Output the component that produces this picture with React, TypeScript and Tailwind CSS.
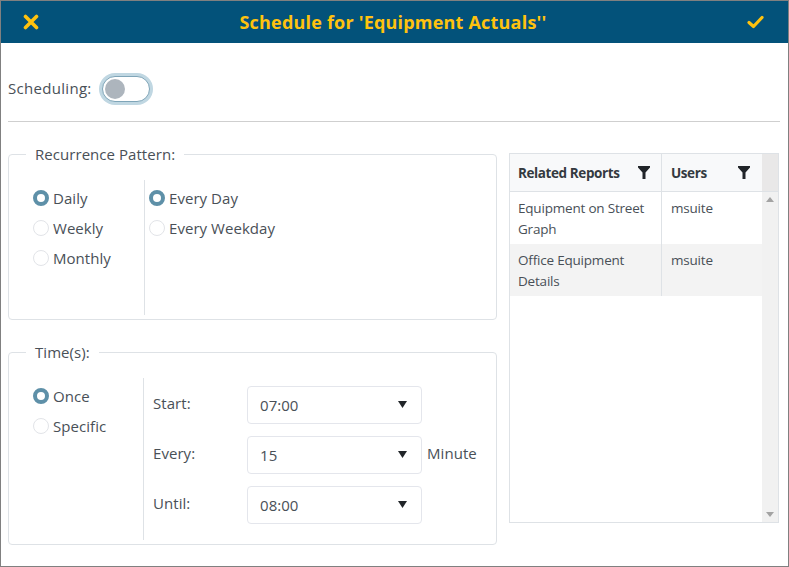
const font = { fontFamily: '"Open Sans", "Noto Sans", sans-serif' };

function Radio({ label, checked }: { label: string; checked?: boolean }) {
  return (
    <div className="flex h-[30px] items-center gap-[4px]">
      <span
        className={
          checked
            ? "h-[16px] w-[16px] rounded-full border-[4px] border-[#5e90a8] bg-white"
            : "h-[16px] w-[16px] rounded-full border border-[#e2e4e8] bg-white"
        }
      />
      <span className="text-[15px] tracking-[0.05px] text-[#495057]">{label}</span>
    </div>
  );
}

function SelectRow({ label, value, unit }: { label: string; value: string; unit?: string }) {
  return (
    <div className="flex h-[38px] items-center">
      <span className="w-[94px] pb-[4px] text-[15px] tracking-[0.05px] text-[#495057]">{label}</span>
      <div className="flex h-[38px] w-[175px] items-center justify-between rounded-[4px] border border-[#e4e6ec] pl-[12px] pr-[14px]">
        <span className="text-[15px] tracking-[0.05px] text-[#495057]">{value}</span>
        <svg width="9" height="7" viewBox="0 0 9 7" className="mb-[2px]">
          <path d="M0 0h9L4.5 7z" fill="#212529" />
        </svg>
      </div>
      {unit && <span className="ml-[5px] pb-[4px] text-[15px] tracking-[0.05px] text-[#495057]">{unit}</span>}
    </div>
  );
}

function FilterIcon() {
  return (
    <svg width="12" height="13" viewBox="0 0 12 13">
      <path d="M0 0h12v1.5L7.5 6.5V13h-3V6.5L0 1.5z" fill="#212529" />
    </svg>
  );
}

function Row({ report, user, shaded }: { report: string; user: string; shaded?: boolean }) {
  return (
    <div className={shaded ? "flex h-[52px] bg-[#f3f3f3]" : "flex h-[52px] bg-white"}>
      <div className="w-[152px] border-r border-[#dee2e6] px-[8px] pt-[6px] text-[13.5px] leading-[21px] tracking-[-0.2px] text-[#495057]">
        {report}
      </div>
      <div className="w-[100px] px-[9px] pt-[6px] text-[13.5px] leading-[21px] tracking-[-0.2px] text-[#495057]">{user}</div>
    </div>
  );
}

export default function App() {
  return (
    <div className="h-[567px] w-[789px] overflow-hidden border border-[#808080] bg-white" style={font}>
      <header className="flex h-[42px] items-center justify-between bg-[#03527a] pl-[22px] pr-[24px]">
        <svg width="16" height="16" viewBox="0 0 16 16">
          <path d="M2.5 2.5l11 11M13.5 2.5l-11 11" stroke="#ffc20e" strokeWidth="3.6" strokeLinecap="round" />
        </svg>
        <h1 className="text-[18px] font-bold tracking-[0.2px] text-[#ffc20e]">Schedule for 'Equipment Actuals''</h1>
        <svg width="17" height="14" viewBox="0 0 17 14">
          <path d="M2 7.5l4.5 4L15 2.5" fill="none" stroke="#ffc20e" strokeWidth="3.2" strokeLinecap="round" strokeLinejoin="round" />
        </svg>
      </header>

      <div className="px-[7px]">
        <div className="mr-[1px] flex h-[79px] items-center gap-[10px] border-b border-[#cfcfcf] pt-[13px]">
          <span className="text-[15px] tracking-[0.3px] text-[#495057]">Scheduling:</span>
          <div className="flex h-[26px] w-[48px] items-center rounded-full border border-[#7fa5b8] bg-white pl-[2px] shadow-[0_0_0_3px_#c0d7e2]">
            <span className="h-[20px] w-[20px] rounded-full bg-[#adb5bd]" />
          </div>
        </div>

        <div className="flex gap-[12px]">
          <div className="w-[489px] pt-[22px]">
            <fieldset className="h-[176px] rounded-[4px] border border-[#dee2e6]">
              <legend className="ml-[17px] px-[9px] text-[15px] leading-[20px] tracking-[0.05px] text-[#495057]">Recurrence Pattern:</legend>
              <div className="mt-[16px] flex">
                <div className="w-[135px] pl-[24px] pt-[3px]">
                  <Radio label="Daily" checked />
                  <Radio label="Weekly" />
                  <Radio label="Monthly" />
                </div>
                <div className="h-[135px] border-l border-[#dee2e6] pl-[4px] pt-[3px]">
                  <Radio label="Every Day" checked />
                  <Radio label="Every Weekday" />
                </div>
              </div>
            </fieldset>

            <fieldset className="mt-[22px] h-[203px] rounded-[4px] border border-[#dee2e6]">
              <legend className="ml-[17px] px-[9px] text-[15px] leading-[20px] tracking-[0.05px] text-[#495057]">Time(s):</legend>
              <div className="mt-[16px] flex">
                <div className="w-[134px] pl-[24px] pt-[3px]">
                  <Radio label="Once" checked />
                  <Radio label="Specific" />
                </div>
                <div className="flex h-[162px] flex-col gap-[12px] border-l border-[#dee2e6] pl-[9px] pt-[8px]">
                  <SelectRow label="Start:" value="07:00" />
                  <SelectRow label="Every:" value="15" unit="Minute" />
                  <SelectRow label="Until:" value="08:00" />
                </div>
              </div>
            </fieldset>
          </div>

          <div className="mt-[31px] h-[370px] w-[270px] border border-[#dee2e6] bg-white">
            <div className="flex h-[38px] border-b border-[#dee2e6]">
              <div className="flex w-[152px] items-center justify-between border-r border-[#dee2e6] bg-[#f8f9fa] pl-[8px] pr-[11px]">
                <span className="pt-[1px] text-[13.5px] font-bold tracking-[-0.4px] text-[#343a40]">Related Reports</span>
                <FilterIcon />
              </div>
              <div className="flex w-[100px] items-center justify-between bg-[#f8f9fa] pl-[9px] pr-[12px]">
                <span className="pt-[1px] text-[13.5px] font-bold tracking-[-0.4px] text-[#343a40]">Users</span>
                <FilterIcon />
              </div>
              <div className="flex-1 bg-[#e9e8e8]" />
            </div>
            <div className="flex h-[330px]">
              <div className="w-[252px]">
                <Row report="Equipment on Street Graph" user="msuite" />
                <Row report="Office Equipment Details" user="msuite" shaded />
              </div>
              <div className="flex flex-1 flex-col items-center justify-between bg-[#f1f1f1] pb-[5px] pt-[5px]">
                <svg width="8" height="5" viewBox="0 0 8 5">
                  <path d="M4 0l4 5H0z" fill="#a3a3a3" />
                </svg>
                <svg width="8" height="5" viewBox="0 0 8 5">
                  <path d="M0 0h8L4 5z" fill="#a3a3a3" />
                </svg>
              </div>
            </div>
          </div>
        </div>
      </div>
    </div>
  );
}
